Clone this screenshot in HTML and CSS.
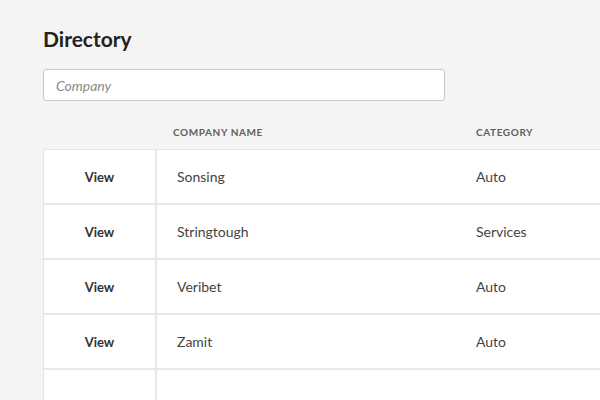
FILE: index.html
```html
<!DOCTYPE html>
<html>
<head>
<meta charset="utf-8">
<link rel="stylesheet" href="styles.css">
</head>
<body>
<div class="page">
  <h1 class="title">Directory</h1>
  <div class="search"><input class="search-input" type="text" placeholder="Company"></div>
  <div class="thead">
    <div class="col-view"></div>
    <div class="col-name th">Company Name</div>
    <div class="col-cat th">Category</div>
  </div>
  <div class="table">
    <div class="row">
      <div class="cell col-view view">View</div>
      <div class="cell col-name name">Sonsing</div>
      <div class="cell col-cat cat">Auto</div>
    </div>
    <div class="row">
      <div class="cell col-view view">View</div>
      <div class="cell col-name name">Stringtough</div>
      <div class="cell col-cat cat">Services</div>
    </div>
    <div class="row">
      <div class="cell col-view view">View</div>
      <div class="cell col-name name">Veribet</div>
      <div class="cell col-cat cat">Auto</div>
    </div>
    <div class="row">
      <div class="cell col-view view">View</div>
      <div class="cell col-name name">Zamit</div>
      <div class="cell col-cat cat">Auto</div>
    </div>
    <div class="row row-last">
      <div class="cell col-view view"></div>
      <div class="cell col-name name"></div>
      <div class="cell col-cat cat"></div>
    </div>
  </div>
</div>
</body>
</html>
```

FILE: styles.css
```css
* { box-sizing: border-box; }
html, body { margin: 0; padding: 0; overflow: hidden; }
body {
  background: #f4f4f4;
  font-family: Lato, "Open Sans", "Noto Sans", sans-serif;
  color: #333;
  width: 600px;
  height: 400px;
}
.page {
  padding: 26px 0 0 43px;
  height: 400px;
  overflow: hidden;
}
.title {
  margin: 0;
  font-size: 21px;
  line-height: 26px;
  font-weight: 700;
  color: #222;
}
.search {
  margin-top: 17px;
  width: 402px;
}
.search-input {
  display: block;
  width: 100%;
  height: 32px;
  border: 1px solid #c8c8c8;
  border-radius: 3px;
  background: #fff;
  padding: 0 12px;
  font-family: inherit;
  font-size: 14px;
  font-style: italic;
  color: #333;
  outline: none;
}
.search-input::placeholder { color: #8a8a8a; font-style: italic; }
.thead {
  display: flex;
  height: 48px;
  align-items: center;
  padding-top: 13px;
}
.th {
  font-size: 10px;
  font-weight: 700;
  letter-spacing: 0.6px;
  text-transform: uppercase;
  color: #5e5e5e;
}
.col-view { width: 113px; flex: none; }
.col-name { width: 303px; flex: none; }
.col-cat { flex: 1; }
.thead .col-view { width: 114px; }
.thead .col-name { padding-left: 16px; }
.thead .col-cat { padding-left: 16px; }
.table {
  background: #fff;
  border-top: 1px solid #e6e6e6;
  border-left: 1px solid #e6e6e6;
}
.row {
  display: flex;
  height: 55px;
  border-bottom: 2px solid #e8e8e8;
}
.row-last { height: 40px; border-bottom: none; }
.cell {
  display: flex;
  align-items: center;
  font-size: 14px;
  color: #444;
}
.view {
  width: 113px;
  justify-content: center;
  font-weight: 700;
  color: #333;
  border-right: 2px solid #e8e8e8;
  font-size: 13px;
}
.name { padding-left: 20px; }
.cat { padding-left: 16px; }
```
